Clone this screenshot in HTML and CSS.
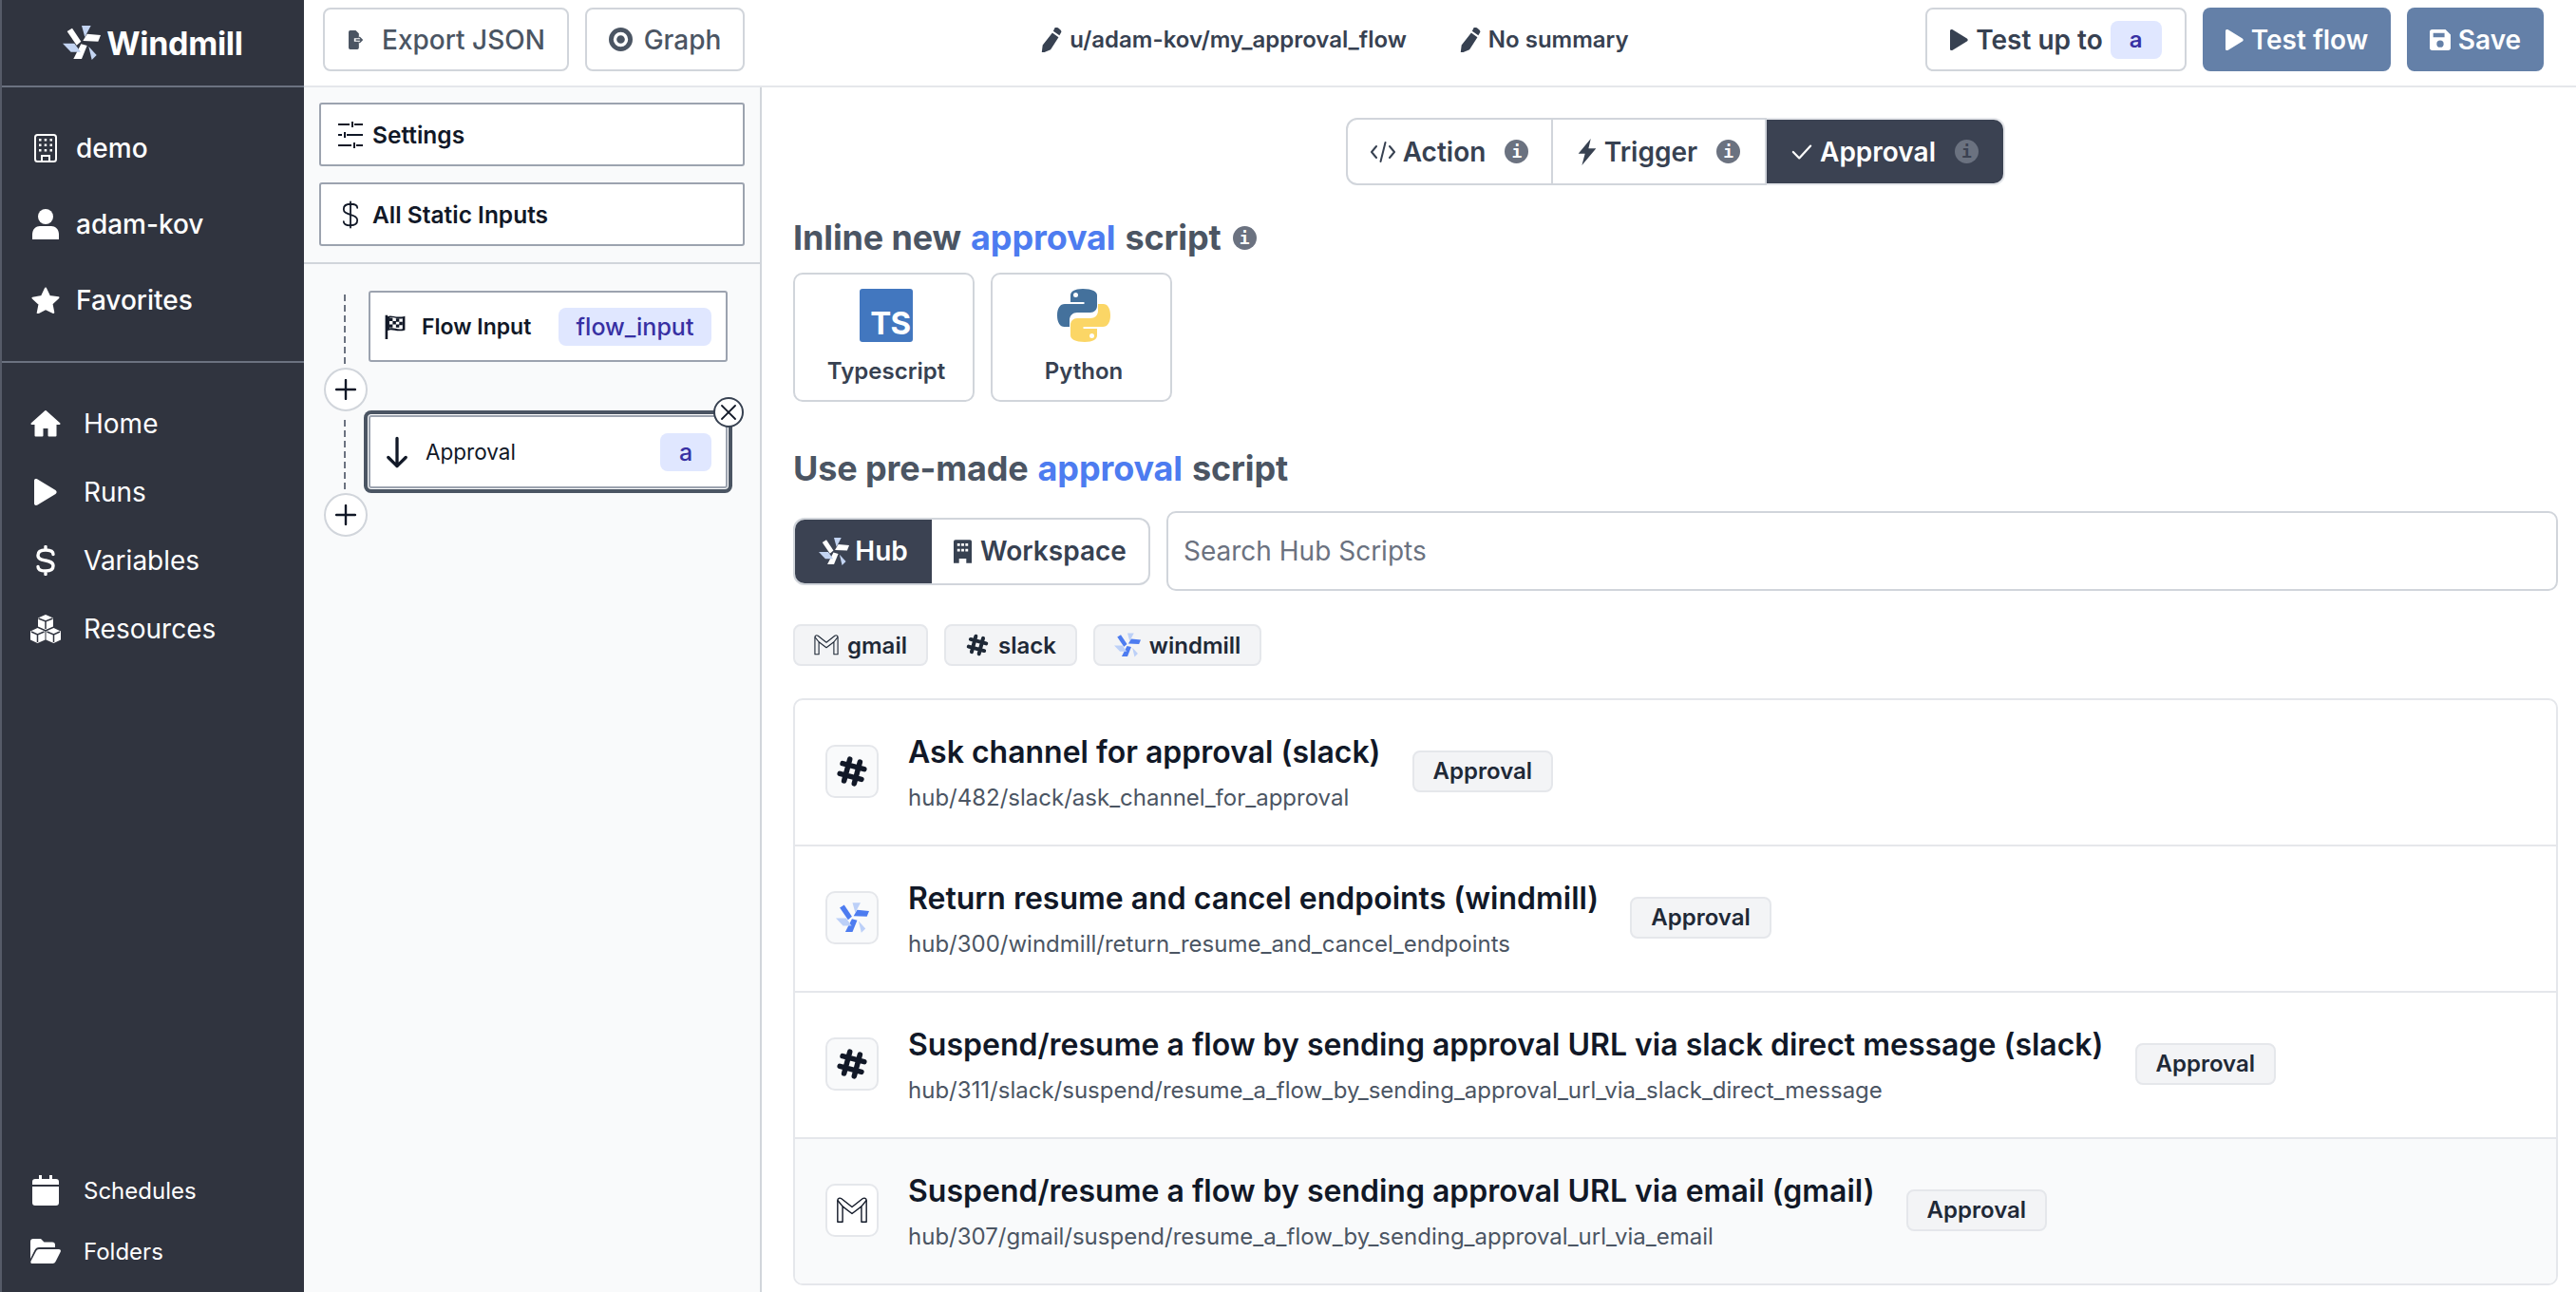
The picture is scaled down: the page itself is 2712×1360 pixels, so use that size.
FILE: index.html
```html
<!DOCTYPE html>
<html lang="en">
<head>
    <meta charset="UTF-8">
    <title>Windmill - Flow editor</title>
    <link rel="stylesheet" href="styles.css">
</head>
<body>
    <!-- icon sprite -->
    <svg class="sprite" xmlns="http://www.w3.org/2000/svg">
        <symbol id="i-windmill" viewBox="0 0 120 108">
            <path class="b-main" d="M14 18L30 8l28 42-14 12z"/>
            <path class="b-soft" d="M60 0h29L70 36z"/>
            <path class="b-main" d="M77 26l43 4-8 20-48-2z"/>
            <path class="b-soft" d="M82 66l25 27-15 15z"/>
            <path class="b-main" d="M34 105h26l17-42-19-5z"/>
            <path class="b-soft" d="M0 56h37l20 27H26z"/>
        </symbol>
        <symbol id="i-building" viewBox="0 0 24 30">
            <rect x="1" y="1" width="22" height="28" rx="2.5" fill="none" stroke="currentColor" stroke-width="2"/>
            <path fill="currentColor" d="M5 5h2.500v2.500H5zM10.700 5h2.500v2.500h-2.500zM16.500 5H19v2.500h-2.500zM5 10.500h2.500V13H5zM10.700 10.500h2.500V13h-2.500zM16.500 10.500H19V13h-2.500zM5 16h2.500v2.500H5zM10.700 16h2.500v2.500h-2.500zM16.500 16H19v2.500h-2.500z"/>
            <path fill="none" stroke="currentColor" stroke-width="2" d="M8 28v-5h8v5"/>
        </symbol>
        <symbol id="i-building-solid" viewBox="0 0 20 26">
            <path fill="currentColor" fill-rule="evenodd" d="M2 0h16a2 2 0 0 1 2 2v24h-6v-5H6v5H0V2a2 2 0 0 1 2-2zm2 4v3h3V4zm4.500 0v3h3V4zM13 4v3h3V4zM4 10v3h3v-3zm4.500 0v3h3v-3zm4.500 0v3h3v-3z"/>
        </symbol>
        <symbol id="i-user" viewBox="0 0 28 32">
            <circle cx="14" cy="8" r="8" fill="currentColor"/>
            <path fill="currentColor" d="M0 32v-5c0-6 4-9 8-9h12c4 0 8 3 8 9v5z"/>
        </symbol>
        <symbol id="i-star" viewBox="0 0 30 28">
            <path fill="currentColor" stroke="currentColor" stroke-width="2" stroke-linejoin="round" d="M15 1.500l4 8.500 9.500 1.200-7 6.500 1.800 9.300L15 23l-8.300 4.500 1.800-9.300-7-6.500L11 10z"/>
        </symbol>
        <symbol id="i-home" viewBox="0 0 32 28">
            <path fill="currentColor" stroke="currentColor" stroke-width="2" stroke-linejoin="round" d="M16 1L1.500 14h4v12.500h7V18h7v8.500h7V14h4z"/>
        </symbol>
        <symbol id="i-play" viewBox="0 0 24 28">
            <path fill="currentColor" d="M0 2c0-2 2-2.500 3.500-1.500l19 11.500c1.500 1 1.500 3 0 4l-19 11.500C2 28.500 0 28 0 26z"/>
        </symbol>
        <symbol id="i-dollar" viewBox="0 0 20 32">
            <path fill="none" stroke="currentColor" stroke-width="3.400" stroke-linecap="round" d="M18 9.500C18 6.500 15 5 10 5S2 6.500 2 10.500 5.500 15 10 16s8 2 8 5.700S15 27 10 27s-8-1.500-8-4.500M10 1.500V5M10 27v3.500"/>
        </symbol>
        <symbol id="i-dollar-thin" viewBox="0 0 20 32">
            <path fill="none" stroke="currentColor" stroke-width="2" stroke-linecap="round" d="M18 8c0-3-3-4.500-8-4.500S2 5.500 2 9.500 5.500 14.500 10 16s8 2.500 8 6.500-3 6-8 6-8-1.500-8-4.500M10 1v30"/>
        </symbol>
        <symbol id="i-cubes" viewBox="0 0 32 30">
            <path fill="currentColor" d="M16 0l8 3.500v9L16 16l-8-3.500v-9zM7.500 14l8 3.500v9L7.500 30 0 26.500v-9zM24.500 14l7.500 3.500v9L24.500 30l-8-3.500v-9z"/>
            <path fill="none" stroke="#30343f" stroke-width="1.500" d="M8.500 4L16 7l7.500-3M16 7v8M1 18l6.500 3 7-3M7.500 21v8M17.500 18l7 3 6.500-3M24.500 21v8"/>
        </symbol>
        <symbol id="i-calendar" viewBox="0 0 28 32">
            <path fill="currentColor" d="M7 0h3v4h8V0h3v4h4a3 3 0 0 1 3 3v3H0V7a3 3 0 0 1 3-3h4zM0 12h28v17a3 3 0 0 1-3 3H3a3 3 0 0 1-3-3z"/>
        </symbol>
        <symbol id="i-folder" viewBox="0 0 32 26">
            <path fill="currentColor" d="M0 3a3 3 0 0 1 3-3h8l3.500 3.500H23a3 3 0 0 1 3 3V9H9c-2 0-3.500 1-4.500 3L0 21z"/>
            <path fill="currentColor" d="M9 11h21c1.500 0 2.400 1.300 1.700 2.700L26.500 24c-.6 1.300-1.700 2-3 2H2c-1.500 0-2-1.300-1.500-2.500L6 13c.6-1.300 1.700-2 3-2z"/>
        </symbol>
        <symbol id="i-pencil" viewBox="0 0 22 28">
            <path fill="currentColor" d="M15 0c1-1 3 0 5 1.500s2.500 3 2 4l-2 3.500L13 4zM12 6l7 5-9 14-7 3H0l1-8z"/>
        </symbol>
        <symbol id="i-bolt" viewBox="0 0 20 30">
            <path fill="currentColor" d="M14 0L0 17h7.500L4 30l16-19h-8.500z"/>
        </symbol>
        <symbol id="i-check" viewBox="0 0 24 18">
            <path fill="none" stroke="currentColor" stroke-width="2.400" stroke-linecap="round" stroke-linejoin="round" d="M2 9l7 7L22 2"/>
        </symbol>
        <symbol id="i-code" viewBox="0 0 26 24">
            <path fill="none" stroke="currentColor" stroke-width="2" stroke-linecap="round" stroke-linejoin="round" d="M6 6l-5 6 5 6M20 6l5 6-5 6M15.500 2l-5 20"/>
        </symbol>
        <symbol id="i-save" viewBox="0 0 24 24">
            <path fill="currentColor" fill-rule="evenodd" d="M3 0h15l6 6v15a3 3 0 0 1-3 3H3a3 3 0 0 1-3-3V3a3 3 0 0 1 3-3zm1 4v5h13V4zm8 8.500a4 4 0 1 0 0 8 4 4 0 0 0 0-8z"/>
        </symbol>
        <symbol id="i-eye" viewBox="0 0 26 26">
            <path fill="currentColor" fill-rule="evenodd" d="M13 0a13 13 0 1 1 0 26 13 13 0 0 1 0-26zm0 5a8 8 0 1 0 0 16 8 8 0 0 0 0-16zm0 3.500a4.500 4.500 0 1 1 0 9 4.500 4.500 0 0 1 0-9z"/>
        </symbol>
        <symbol id="i-export" viewBox="0 0 18 24">
            <path fill="currentColor" d="M0 2a2 2 0 0 1 2-2h7l4 4v6H7v4h6v8a2 2 0 0 1-2 2H2a2 2 0 0 1-2-2z"/>
            <path fill="none" stroke="currentColor" stroke-width="1.800" d="M9 12h8M13.500 8.500L17 12l-3.500 3.500"/>
        </symbol>
        <symbol id="i-sliders" viewBox="0 0 26 28">
            <path fill="none" stroke="currentColor" stroke-width="2" d="M0 3h12M17 3h9M15 0v6M0 14h4M9 14h17M7 11v6M0 25h14M19 25h7M17 22v6"/>
        </symbol>
        <symbol id="i-flag" viewBox="0 0 24 30">
            <path fill="currentColor" fill-rule="evenodd" d="M0 1h3v1.500C8 0 12 5 24 2v17c-10 3-15-2-21 .5V30H0zm5 3v13c5-2 9 2 16 .5V5C14 6.500 10 2 5 4z"/>
            <path fill="currentColor" d="M5 4h4v4H5zM13 5h4v4h-4zM9 8h4v4H9zM17 9h4v4h-4zM5 12h4v4H5zM13 12h4v4h-4z"/>
        </symbol>
        <symbol id="i-arrow" viewBox="0 0 24 36">
            <path fill="none" stroke="currentColor" stroke-width="3.600" stroke-linecap="round" stroke-linejoin="round" d="M12 2v32M2 24l10 10 10-10"/>
        </symbol>
        <symbol id="i-x" viewBox="0 0 20 20">
            <path fill="none" stroke="currentColor" stroke-width="1.800" stroke-linecap="round" d="M3 3l14 14M17 3L3 17"/>
        </symbol>
        <symbol id="i-plus" viewBox="0 0 22 22">
            <path fill="none" stroke="currentColor" stroke-width="2.400" stroke-linecap="round" d="M11 1v20M1 11h20"/>
        </symbol>
        <symbol id="i-slack" viewBox="-1 -1 26 26">
            <path fill="none" stroke="currentColor" stroke-width="4" stroke-linecap="round" d="M8 3.500v17M16 3.500v17M3.500 8h17M3.500 16h17" transform="rotate(15 12 12)"/>
        </symbol>
        <symbol id="i-gmail" viewBox="0 0 28 24">
            <path fill="none" stroke="currentColor" stroke-width="1.200" stroke-linejoin="round" d="M1 3c0-2 2-2.500 3.500-1.500L14 9l9.500-7.500C25 .5 27 1 27 3v19.500h-4.500V8.500L14 15 5.500 8.500v14H1z"/>
            <path fill="none" stroke="currentColor" stroke-width="1.200" d="M1 3l4.500 5.500M27 3l-4.500 5.500"/>
        </symbol>
        <symbol id="i-python" viewBox="0 0 56 56">
            <path fill="#44719c" fill-rule="evenodd" d="M27 0c-9 0-13 3-13 7v7h14.500v2H8c-5 0-8 4.500-8 12 0 7.500 3 12 7.500 12H13v-7c0-5 3.500-8 8-8h14c4 0 7-3 7-7V7c0-4-5-7-15-7zm-7.500 4a2.500 2.500 0 1 1 0 5 2.500 2.500 0 0 1 0-5z"/>
            <path fill="#fbd666" fill-rule="evenodd" d="M29 56c9 0 13-3 13-7v-7H27.500v-2H48c5 0 8-4.500 8-12 0-7.500-3-12-7.500-12H43v7c0 5-3.500 8-8 8H21c-4 0-7 3-7 7v11c0 4 5 7 15 7zm7.500-4a2.500 2.500 0 1 1 0-5 2.500 2.500 0 0 1 0 5z"/>
        </symbol>
    </svg>

    <div class="app">
        <aside class="sidebar">
            <div class="logo">
                <svg class="logo-mark"><use href="#i-windmill"/></svg>
                <span>Windmill</span>
            </div>
            <nav class="nav nav-user">
                <a class="nav-item"><span class="nav-icon"><svg class="ic-building"><use href="#i-building"/></svg></span>demo</a>
                <a class="nav-item"><span class="nav-icon"><svg class="ic-user"><use href="#i-user"/></svg></span>adam-kov</a>
                <a class="nav-item"><span class="nav-icon"><svg class="ic-star"><use href="#i-star"/></svg></span>Favorites</a>
            </nav>
            <nav class="nav nav-main">
                <a class="nav-item"><span class="nav-icon"><svg class="ic-home"><use href="#i-home"/></svg></span>Home</a>
                <a class="nav-item"><span class="nav-icon"><svg class="ic-play"><use href="#i-play"/></svg></span>Runs</a>
                <a class="nav-item"><span class="nav-icon"><svg class="ic-dollar"><use href="#i-dollar"/></svg></span>Variables</a>
                <a class="nav-item"><span class="nav-icon"><svg class="ic-home"><use href="#i-cubes"/></svg></span>Resources</a>
            </nav>
            <nav class="nav nav-bottom">
                <a class="nav-item"><span class="nav-icon"><svg class="ic-calendar"><use href="#i-calendar"/></svg></span>Schedules</a>
                <a class="nav-item"><span class="nav-icon"><svg class="ic-folder"><use href="#i-folder"/></svg></span>Folders</a>
            </nav>
        </aside>

        <div class="content">
            <header class="topbar">
                <div class="topbar-group">
                    <button class="btn btn-export"><svg class="ic-export"><use href="#i-export"/></svg>Export JSON</button>
                    <button class="btn btn-graph"><svg class="ic-eye"><use href="#i-eye"/></svg>Graph</button>
                </div>
                <div class="topbar-group path-group">
                    <span class="path-edit"><svg class="ic-pencil"><use href="#i-pencil"/></svg>u/adam-kov/my_approval_flow</span>
                    <span class="path-edit"><svg class="ic-pencil"><use href="#i-pencil"/></svg>No summary</span>
                </div>
                <div class="topbar-group">
                    <button class="btn btn-test"><svg class="ic-small-play"><use href="#i-play"/></svg>Test up to<span class="id-badge">a</span></button>
                    <button class="btn btn-primary btn-flow"><svg class="ic-small-play"><use href="#i-play"/></svg>Test flow</button>
                    <button class="btn btn-primary btn-save"><svg class="ic-save"><use href="#i-save"/></svg>Save</button>
                </div>
            </header>

            <div class="editor">
                <section class="flow-panel">
                    <div class="flow-actions">
                        <button class="flow-btn"><svg class="ic-sliders"><use href="#i-sliders"/></svg>Settings</button>
                        <button class="flow-btn"><svg class="ic-dollar-thin"><use href="#i-dollar-thin"/></svg>All Static Inputs</button>
                    </div>
                    <div class="flow-tree">
                        <div class="flow-row">
                            <div class="rail"></div>
                            <div class="node">
                                <svg class="ic-flag"><use href="#i-flag"/></svg>
                                <span class="node-label">Flow Input</span>
                                <span class="id-badge badge-wide">flow_input</span>
                            </div>
                        </div>
                        <button class="add-step"><svg class="ic-plus"><use href="#i-plus"/></svg></button>
                        <div class="flow-row flow-row-active">
                            <div class="rail"></div>
                            <div class="node node-active">
                                <svg class="ic-arrow"><use href="#i-arrow"/></svg>
                                <span class="node-label node-plain">Approval</span>
                                <span class="id-badge">a</span>
                                <button class="node-close"><svg class="ic-x"><use href="#i-x"/></svg></button>
                            </div>
                        </div>
                        <button class="add-step"><svg class="ic-plus"><use href="#i-plus"/></svg></button>
                    </div>
                </section>

                <main class="step-panel">
                    <div class="kind-tabs">
                        <div class="kind-tab tab-action"><svg class="ic-code"><use href="#i-code"/></svg>Action<span class="info">i</span></div>
                        <div class="kind-tab tab-trigger"><svg class="ic-bolt"><use href="#i-bolt"/></svg>Trigger<span class="info">i</span></div>
                        <div class="kind-tab tab-approval active"><svg class="ic-check"><use href="#i-check"/></svg>Approval<span class="info">i</span></div>
                    </div>

                    <h2 class="section-title">Inline new <span class="accent">approval</span> script <span class="info info-title">i</span></h2>
                    <div class="lang-cards">
                        <div class="lang-card">
                            <div class="ts-logo">TS</div>
                            <span>Typescript</span>
                        </div>
                        <div class="lang-card">
                            <svg class="py-logo"><use href="#i-python"/></svg>
                            <span>Python</span>
                        </div>
                    </div>

                    <h2 class="section-title title-premade">Use pre-made <span class="accent">approval</span> script</h2>
                    <div class="search-row">
                        <div class="source-toggle">
                            <div class="source source-hub"><svg class="ic-src"><use href="#i-windmill"/></svg>Hub</div>
                            <div class="source"><svg class="ic-src-b"><use href="#i-building-solid"/></svg>Workspace</div>
                        </div>
                        <input class="search" type="text" placeholder="Search Hub Scripts">
                    </div>

                    <div class="chips">
                        <span class="chip"><svg class="ic-chip"><use href="#i-gmail"/></svg>gmail</span>
                        <span class="chip"><svg class="ic-chip-s"><use href="#i-slack"/></svg>slack</span>
                        <span class="chip"><svg class="ic-chip-w wm-blue"><use href="#i-windmill"/></svg>windmill</span>
                    </div>

                    <ul class="script-list">
                        <li class="script">
                            <div class="script-icon"><svg class="ic-list-s"><use href="#i-slack"/></svg></div>
                            <div class="script-text">
                                <div class="script-title">Ask channel for approval (slack)</div>
                                <div class="script-path">hub/482/slack/ask_channel_for_approval</div>
                            </div>
                            <span class="chip kind-chip">Approval</span>
                        </li>
                        <li class="script">
                            <div class="script-icon"><svg class="ic-list-w wm-blue"><use href="#i-windmill"/></svg></div>
                            <div class="script-text">
                                <div class="script-title">Return resume and cancel endpoints (windmill)</div>
                                <div class="script-path">hub/300/windmill/return_resume_and_cancel_endpoints</div>
                            </div>
                            <span class="chip kind-chip">Approval</span>
                        </li>
                        <li class="script">
                            <div class="script-icon"><svg class="ic-list-s"><use href="#i-slack"/></svg></div>
                            <div class="script-text">
                                <div class="script-title">Suspend/resume a flow by sending approval URL via slack direct message (slack)</div>
                                <div class="script-path">hub/311/slack/suspend/resume_a_flow_by_sending_approval_url_via_slack_direct_message</div>
                            </div>
                            <span class="chip kind-chip">Approval</span>
                        </li>
                        <li class="script script-hover">
                            <div class="script-icon"><svg class="ic-list-g"><use href="#i-gmail"/></svg></div>
                            <div class="script-text">
                                <div class="script-title">Suspend/resume a flow by sending approval URL via email (gmail)</div>
                                <div class="script-path">hub/307/gmail/suspend/resume_a_flow_by_sending_approval_url_via_email</div>
                            </div>
                            <span class="chip kind-chip">Approval</span>
                        </li>
                    </ul>
                </main>
            </div>
        </div>
    </div>
</body>
</html>
```

FILE: styles.css
```css
* { box-sizing: border-box; }
html, body { margin: 0; height: 100%; }
body { font-family: "Inter", "Liberation Sans", sans-serif; color: #111827; background: #fff; overflow: hidden; }
button { font-family: inherit; cursor: pointer; background: #fff; }
svg { display: block; flex: none; }
.sprite { position: absolute; width: 0; height: 0; }
.b-main { fill: var(--blade-main, #fff); }
.b-soft { fill: var(--blade-soft, #c3d4f2); }

.app { display: flex; height: 1360px; }

/* sidebar */
.sidebar { width: 320px; flex: none; display: flex; flex-direction: column; background: #30343f; color: #fff; border-left: 2px solid #565b68; }
.logo { height: 92px; flex: none; display: flex; align-items: center; justify-content: center; gap: 6px; border-bottom: 2px solid #6b7280; font-size: 34px; font-weight: 700; letter-spacing: -0.3px; }
.logo-mark { width: 40px; height: 36px; }
.nav { display: flex; flex-direction: column; }
.nav-item { display: flex; align-items: center; color: #fff; }
.nav-icon { width: 32px; display: flex; justify-content: center; flex: none; }
.nav-user { padding: 24px 0 24px 30px; border-bottom: 2px solid #6b7280; }
.nav-user .nav-item { height: 80px; font-size: 28px; font-weight: 500; gap: 16px; }
.nav-main { padding: 28px 0 0 30px; }
.nav-main .nav-item { height: 72px; font-size: 28px; gap: 24px; }
.nav-bottom { margin-top: auto; padding: 0 0 11px 30px; }
.nav-bottom .nav-item { height: 64px; font-size: 24px; gap: 24px; }
.ic-building { width: 24px; height: 30px; }
.ic-user { width: 28px; height: 32px; }
.ic-star { width: 30px; height: 28px; }
.ic-home { width: 32px; height: 30px; }
.ic-play { width: 24px; height: 28px; }
.ic-dollar { width: 20px; height: 32px; }
.ic-calendar { width: 28px; height: 32px; }
.ic-folder { width: 32px; height: 26px; }

/* top bar */
.content { flex: 1; min-width: 0; display: flex; flex-direction: column; }
.topbar { height: 92px; flex: none; display: flex; align-items: flex-start; justify-content: space-between; padding: 8px 34px 0 20px; border-bottom: 2px solid #e5e7eb; }
.topbar-group { display: flex; align-items: center; gap: 17px; height: 67px; }
.btn { height: 67px; display: flex; align-items: center; justify-content: center; border: 2px solid #d1d5db; border-radius: 8px; font-size: 28px; font-weight: 500; color: #4b5563; padding: 0; }
.btn-export { width: 259px; gap: 20px; }
.ic-export { width: 15px; height: 22px; margin-left: 2px; }
.btn-graph { width: 168px; gap: 12px; }
.ic-eye { width: 25px; height: 25px; }
.path-group { gap: 56px; }
.path-edit { display: flex; align-items: center; gap: 8px; font-size: 24px; font-weight: 600; color: #374151; }
.ic-pencil { width: 22px; height: 26px; }
.btn-test { width: 275px; gap: 8px; color: #374151; font-weight: 600; }
.ic-small-play { width: 19px; height: 24px; }
.btn-primary { border: none; color: #fff; background: #6480a8; font-weight: 600; gap: 8px; }
.btn-flow { width: 198px; }
.btn-save { width: 144px; }
.ic-save { width: 22px; height: 22px; }
.id-badge { display: flex; align-items: center; justify-content: center; height: 40px; min-width: 54px; border-radius: 8px; background: #e0e7ff; color: #3730a3; font-size: 24px; font-weight: 600; }

/* flow panel */
.editor { flex: 1; min-height: 0; display: flex; }
.flow-panel { width: 482px; flex: none; background: #f9fafb; border-right: 2px solid #d1d5db; }
.flow-actions { display: flex; flex-direction: column; gap: 17px; padding: 16px 16px 17px 16px; border-bottom: 2px solid #d1d5db; }
.flow-btn { height: 67px; display: flex; align-items: center; gap: 10px; padding: 0 18px; border: 2px solid #9ca3af; border-radius: 3px; font-size: 24.5px; font-weight: 600; color: #111827; }
.ic-sliders { width: 26px; height: 28px; }
.ic-dollar-thin { width: 18px; height: 32px; margin: 0 4px; }
.flow-tree { padding: 28px 0 0 21px; display: flex; flex-direction: column; align-items: flex-start; }
.flow-row { display: flex; width: 427px; height: 81px; }
.flow-row-active { height: 86px; padding-top: 4px; }
.rail { width: 2px; flex: none; margin: 4px 24px 0 21px; height: 76px; background: repeating-linear-gradient(#6b7280 0 7px, transparent 7px 11px); }
.flow-row-active .rail { margin-top: 5px; }
.node { position: relative; width: 378px; height: 75px; display: flex; align-items: center; background: #fff; border: 2px solid #9ca3af; border-radius: 3px; padding: 0 15px; }
.node-active { height: 77px; box-shadow: 0 0 0 1px #fff, 0 0 0 5px #4b5563; border-radius: 3px; }
.ic-flag { width: 22px; height: 26px; margin-right: 17px; }
.ic-arrow { width: 22px; height: 36px; margin-left: 2px; margin-right: 19px; }
.node-label { flex: 1; font-size: 23px; font-weight: 600; color: #111827; }
.node-plain { font-size: 22.500px; font-weight: 400; }
.badge-wide { width: 161px; }
.node .id-badge { font-size: 25px; font-weight: 500; }
.node-close { position: absolute; right: -19px; top: -21px; width: 32px; height: 32px; padding: 0; display: flex; align-items: center; justify-content: center; border: 2px solid #374151; border-radius: 50%; color: #111827; }
.ic-x { width: 20px; height: 20px; }
.add-step { width: 46px; height: 46px; padding: 0; display: flex; align-items: center; justify-content: center; border: 2px solid #d1d5db; border-radius: 50%; color: #111827; position: relative; }
.ic-plus { width: 22px; height: 22px; }

/* step picker */
.step-panel { flex: 1; min-width: 0; padding: 32px 19px 0 33px; }
.kind-tabs { display: flex; width: 694px; height: 71px; margin: 0 auto; }
.kind-tab { display: flex; align-items: center; justify-content: center; gap: 8px; border: 2px solid #d1d5db; border-left: none; font-size: 28px; font-weight: 600; color: #374151; }
.tab-action { width: 218px; border-left: 2px solid #d1d5db; border-radius: 12px 0 0 12px; }
.tab-trigger { width: 225px; }
.tab-approval { width: 251px; border-radius: 0 12px 12px 0; }
.kind-tab.active { background: #3b4252; border-color: #e5e7eb; color: #fff; }
.ic-code { width: 26px; height: 24px; }
.ic-bolt { width: 20px; height: 28px; }
.ic-check { width: 22px; height: 18px; }
.info { width: 25px; height: 25px; margin-left: 12px; flex: none; display: inline-flex; align-items: center; justify-content: center; border-radius: 50%; background: #6b7280; color: #fff; font-size: 18px; font-weight: 800; letter-spacing: 0; font-family: "DejaVu Sans Mono", monospace; }
.kind-tab.active .info { color: #3b4252; }
.section-title { margin: 28px 0 10px; height: 54px; display: flex; align-items: center; gap: 10px; font-size: 36px; font-weight: 700; letter-spacing: -0.13px; color: #4b5563; }
.info-title { margin-left: 2px; }
.title-premade { margin: 43px 0 18px; }
.accent { color: #4d7cf0; }
.lang-cards { display: flex; gap: 17px; }
.lang-card { width: 191px; height: 136px; display: flex; flex-direction: column; align-items: center; padding: 15px 0 0 5px; border: 2px solid #d1d5db; border-radius: 10px; font-size: 24px; font-weight: 600; color: #374151; }
.lang-card span { margin-top: 16px; }
.ts-logo { width: 56px; height: 56px; display: flex; align-items: flex-end; justify-content: flex-end; padding-right: 3px; border-radius: 3px; background: #4277bf; color: #fff; font-size: 33px; font-weight: 700; line-height: 40px; letter-spacing: -1px; }
.py-logo { width: 56px; height: 56px; }

.search-row { display: flex; align-items: center; gap: 17px; }
.source-toggle { display: flex; height: 71px; width: 376px; border: 2px solid #d1d5db; border-radius: 12px; overflow: hidden; }
.source { display: flex; align-items: center; justify-content: center; gap: 9px; flex: 1; font-size: 28px; font-weight: 600; color: #374151; }
.source-hub { flex: none; width: 144px; gap: 6px; background: #3b4252; color: #fff; }
.ic-src { width: 32px; height: 29px; }
.ic-src-b { width: 19px; height: 25px; }
.search { flex: 1; min-width: 0; height: 84px; padding: 0 16px; border: 2px solid #d1d5db; border-radius: 10px; font-family: inherit; font-size: 28px; color: #111827; }
.search::placeholder { color: #6b7280; opacity: 1; }

.chips { display: flex; gap: 17px; margin-top: 35px; }
.chip { height: 44px; display: inline-flex; align-items: center; gap: 9px; padding: 0 20px; border: 2px solid #e5e7eb; border-radius: 8px; background: #f3f4f6; font-size: 24px; font-weight: 600; color: #1f2937; }
.ic-chip { width: 26px; height: 24px; }
.ic-chip-s { width: 26px; height: 26px; }
.ic-chip-w { width: 28px; height: 26px; }
.wm-blue { --blade-main: #4d7cf0; --blade-soft: #bcd0f8; }

.script-list { list-style: none; margin: 34px 0 0; padding: 0; border: 2px solid #e5e7eb; border-radius: 10px; overflow: hidden; }
.script { height: 154px; display: flex; align-items: center; padding: 0 32px 3px; border-bottom: 2px solid #e5e7eb; }
.script:last-child { border-bottom: none; height: 152px; }
.script-hover { background: #f9fafb; }
.script-icon { width: 56px; height: 56px; flex: none; display: flex; align-items: center; justify-content: center; border: 2px solid #e5e7eb; border-radius: 10px; background: #f9fafb; color: #111827; margin-right: 31px; }
.script-hover .script-icon { background: #fff; }
.ic-list-s { width: 36px; height: 36px; }
.ic-list-w { width: 35px; height: 32px; }
.ic-list-g { width: 36px; height: 28px; }
.script-text { margin-top: 3px; }
.script-title { font-size: 32px; font-weight: 600; line-height: 48px; color: #111827; }
.script-path { font-size: 24px; line-height: 36px; margin-top: 6px; color: #4b5563; }
.kind-chip { margin-left: 33px; }
```
